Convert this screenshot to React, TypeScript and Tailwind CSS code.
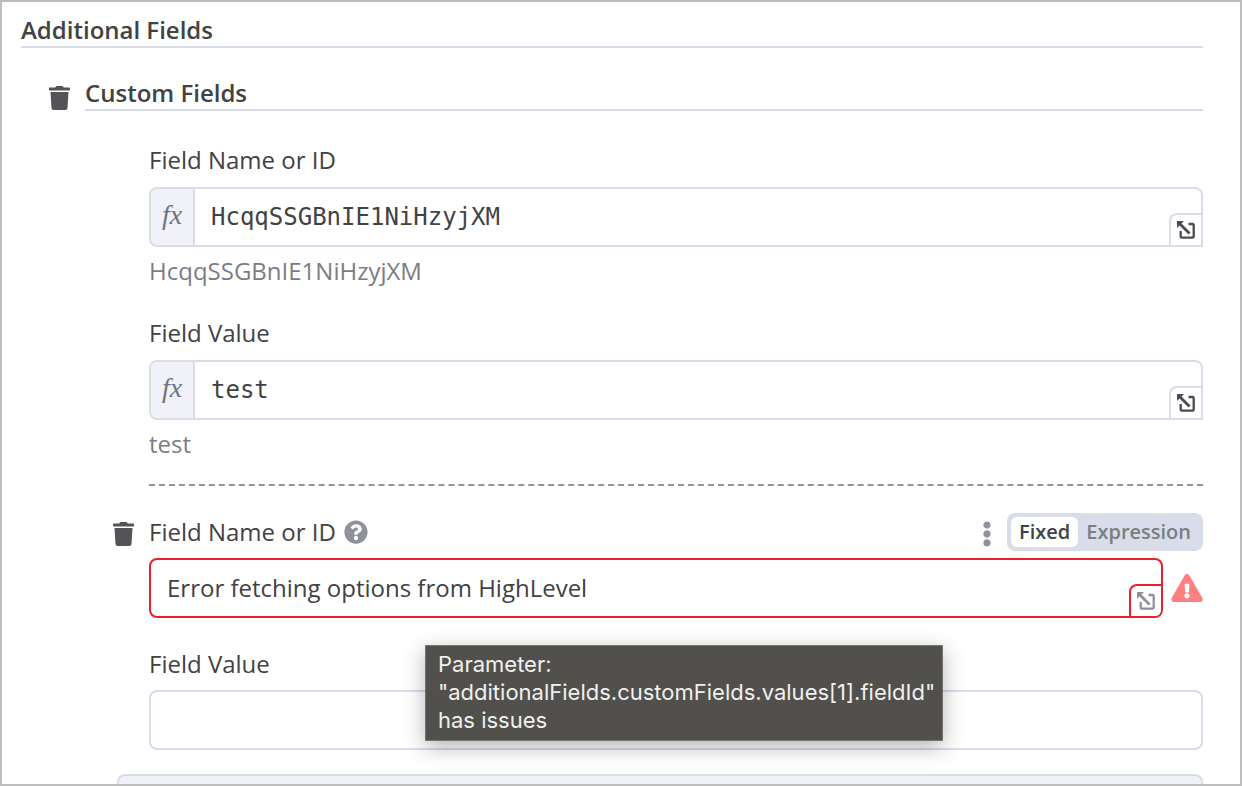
import { ReactNode, useState } from "react";
import clsx from "clsx";
import {
  FaEllipsisV,
  FaExclamationTriangle,
  FaQuestionCircle,
  FaTrash,
} from "react-icons/fa";

function ExpandIcon() {
  return (
    <svg viewBox="0 0 18 18" className="size-[18px]" fill="none" aria-hidden="true">
      <path
        d="M11.500 3h4.200a1 1 0 0 1 1 1v11.700a1 1 0 0 1-1 1H4.700a1 1 0 0 1-1-1V10"
        stroke="currentColor"
        strokeWidth="2.300"
      />
      <path d="M2.500 2.500l10 10" stroke="currentColor" strokeWidth="2.800" />
      <path d="M0 0h7L0 7z" fill="currentColor" />
    </svg>
  );
}

function ExpandButton({ error = false }: { error?: boolean }) {
  return (
    <button
      type="button"
      aria-label="Open editor"
      className={clsx(
        "flex size-8 shrink-0 items-center justify-center self-end rounded-tl-lg border-t-2 border-l-2 bg-white",
        error ? "border-[#ea1f30] text-[#8f929c]" : "border-[#d9dde9] text-[#4b4c50]"
      )}
    >
      <ExpandIcon />
    </button>
  );
}

function DeleteButton({ label }: { label: string }) {
  return (
    <button
      type="button"
      aria-label={label}
      className="mr-[15px] ml-7 shrink-0 self-start text-[#525458]"
    >
      <FaTrash className="h-6 w-[21px]" />
    </button>
  );
}

interface ExpressionFieldProps {
  id: string;
  label: string;
  initial: string;
}

function ExpressionField({ id, label, initial }: ExpressionFieldProps) {
  const [value, setValue] = useState(initial);

  return (
    <div>
      <label htmlFor={id} className="block leading-8">
        {label}
      </label>
      <div className="mt-[11px] flex h-[60px] rounded-lg rounded-br-none border-2 border-[#d9dde9]">
        <span className="flex w-11 shrink-0 justify-center rounded-l-md border-r-2 border-[#d9dde9] bg-[#f1f2f8] pt-[10px] font-['Liberation_Serif',serif] text-[28px] leading-8 text-[#6f7480] italic">
          fx
        </span>
        <input
          id={id}
          value={value}
          onChange={(e) => setValue(e.target.value)}
          className="min-w-0 flex-1 pl-4 font-['DejaVu_Sans_Mono',monospace] outline-none"
        />
        <ExpandButton />
      </div>
      <p className="mt-2 leading-8 text-[#7b7d83]">{value}</p>
    </div>
  );
}

function ModeSwitch() {
  const [mode, setMode] = useState("Fixed");

  return (
    <div className="flex rounded-lg bg-[#d9dde9] p-1 text-xl leading-[30px] font-semibold">
      {["Fixed", "Expression"].map((m) => (
        <button
          key={m}
          type="button"
          aria-pressed={mode === m}
          onClick={() => setMode(m)}
          className={clsx(
            "rounded-md px-2",
            mode === m ? "bg-white text-[#414244]" : "text-[#7b7d83]"
          )}
        >
          {m}
        </button>
      ))}
    </div>
  );
}

function SectionTitle({ children }: { children: ReactNode }) {
  return (
    <h2 className="border-b-2 border-[#d9dde9] leading-8 font-semibold">
      {children}
    </h2>
  );
}

export default function App() {
  return (
    <main className="h-screen overflow-hidden border-2 border-[#bdbdbd] bg-white pt-3 pr-[37px] pl-[19px] font-['Open_Sans',sans-serif] text-2xl text-[#414244]">
      <SectionTitle>Additional Fields</SectionTitle>

      <div className="mt-[29px] flex">
        <div className="flex pt-[9px]">
          <DeleteButton label="Delete custom fields" />
        </div>

        <div className="min-w-0 flex-1">
          <SectionTitle>Custom Fields</SectionTitle>

          <div className="mt-[33px] ml-16">
            <ExpressionField
              id="name-0"
              label="Field Name or ID"
              initial="HcqqSSGBnIE1NiHzyjXM"
            />
            <div className="mt-[30px]">
              <ExpressionField id="value-0" label="Field Value" initial="test" />
            </div>
            <hr className="mt-6 border-t-2 border-dashed border-[#949494]" />
          </div>

          <div className="mt-[27px] flex">
            <div className="flex pt-[9px]">
              <DeleteButton label="Delete item" />
            </div>

            <div className="min-w-0 flex-1">
              <div className="flex items-center">
                <label htmlFor="name-1" className="leading-8">
                  Field Name or ID
                </label>
                <button type="button" aria-label="Help" className="ml-2 text-[#8f929c]">
                  <FaQuestionCircle className="size-6" />
                </button>
                <button
                  type="button"
                  aria-label="Parameter options"
                  className="mr-[15px] ml-auto pt-1 text-[#8f929c]"
                >
                  <FaEllipsisV className="h-[26px] w-[10px]" />
                </button>
                <ModeSwitch />
              </div>

              <div className="mt-[7px] flex items-center gap-2">
                <div className="flex h-[60px] min-w-0 flex-1 overflow-hidden rounded-lg border-2 border-[#ea1f30]">
                  <input
                    id="name-1"
                    readOnly
                    value="Error fetching options from HighLevel"
                    className="min-w-0 flex-1 pl-4 outline-none"
                  />
                  <ExpandButton error />
                </div>
                <FaExclamationTriangle className="h-7 w-8 shrink-0 text-[#ff8080]" />
              </div>

              <div className="relative mt-[30px]">
                <label htmlFor="value-1" className="block leading-8">
                  Field Value
                </label>
                <input
                  id="value-1"
                  className="mt-[10px] block h-[60px] w-full rounded-lg border-2 border-[#d9dde9] px-4 outline-none"
                />
                <div
                  role="tooltip"
                  className="absolute -top-[3px] left-[276px] w-[518px] border border-[#757573] bg-[#51504d] pt-1 pb-[6px] pl-3 font-['Inter',sans-serif] text-[22px] leading-7 whitespace-nowrap text-[#f0f0ee] shadow-[0_6px_20px_rgba(0,0,0,0.3)]"
                >
                  Parameter:
                  <br />
                  "additionalFields.customFields.values[1].fieldId"
                  <br />
                  has issues
                </div>
              </div>
            </div>
          </div>

          <button
            type="button"
            aria-label="Add custom field"
            className="mt-6 ml-8 block h-[60px] w-[calc(100%-32px)] rounded-lg border-2 border-[#d9dde9] bg-[#f1f2f8]"
          />
        </div>
      </div>
    </main>
  );
}
